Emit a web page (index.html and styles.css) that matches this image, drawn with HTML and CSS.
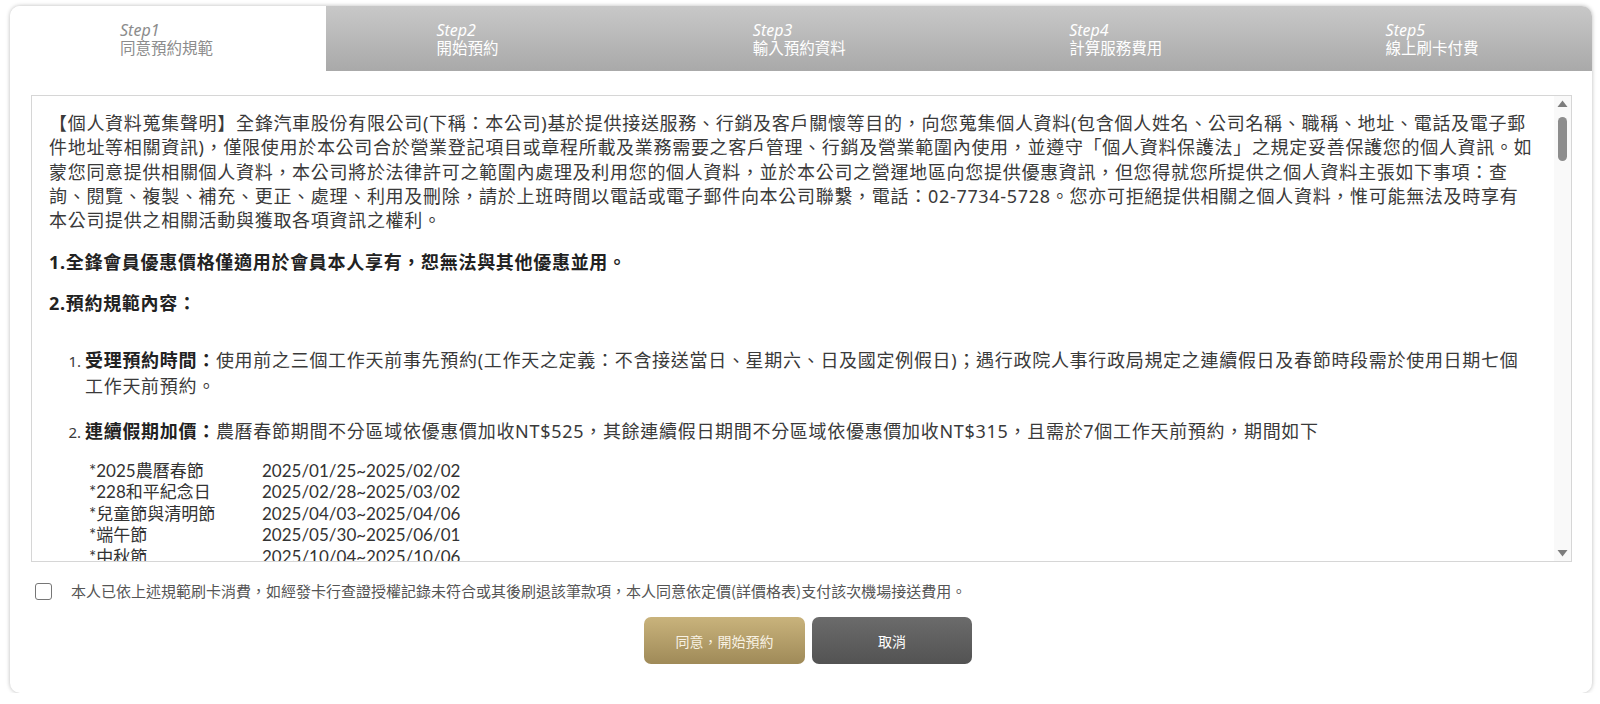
FILE: index.html
```html
<!DOCTYPE html>
<html lang="zh-Hant">
<head>
<meta charset="utf-8">
<title>同意預約規範</title>
<link rel="stylesheet" href="styles.css">
</head>
<body>
<div class="card">
  <div class="tabs">
    <div class="tab active"><span class="step-num">Step1</span><span class="step-name">同意預約規範</span></div>
    <div class="tab"><span class="step-num">Step2</span><span class="step-name">開始預約</span></div>
    <div class="tab"><span class="step-num">Step3</span><span class="step-name">輸入預約資料</span></div>
    <div class="tab"><span class="step-num">Step4</span><span class="step-name">計算服務費用</span></div>
    <div class="tab"><span class="step-num">Step5</span><span class="step-name">線上刷卡付費</span></div>
  </div>

  <div class="terms-wrap">
    <div class="terms">
      <p class="intro">【個人資料蒐集聲明】全鋒汽車股份有限公司(下稱：本公司)基於提供接送服務、行銷及客戶關懷等目的，向您蒐集個人資料(包含個人姓名、公司名稱、職稱、地址、電話及電子郵件地址等相關資訊)，僅限使用於本公司合於營業登記項目或章程所載及業務需要之客戶管理、行銷及營業範圍內使用，並遵守「個人資料保護法」之規定妥善保護您的個人資訊。如蒙您同意提供相關個人資料，本公司將於法律許可之範圍內處理及利用您的個人資料，並於本公司之營運地區向您提供優惠資訊，但您得就您所提供之個人資料主張如下事項：查詢、閱覽、複製、補充、更正、處理、利用及刪除，請於上班時間以電話或電子郵件向本公司聯繫，電話：02-7734-5728。您亦可拒絕提供相關之個人資料，惟可能無法及時享有本公司提供之相關活動與獲取各項資訊之權利。</p>
      <p class="rule rule-first">1.全鋒會員優惠價格僅適用於會員本人享有，恕無法與其他優惠並用。</p>
      <p class="rule">2.預約規範內容：</p>
      <ol class="rule-list">
        <li class="item-first"><strong>受理預約時間：</strong>使用前之三個工作天前事先預約(工作天之定義：不含接送當日、星期六、日及國定例假日)；遇行政院人事行政局規定之連續假日及春節時段需於使用日期七個工作天前預約。</li>
        <li class="item-second"><strong>連續假期加價：</strong>農曆春節期間不分區域依優惠價加收NT$525，其餘連續假日期間不分區域依優惠價加收NT$315，且需於7個工作天前預約，期間如下
          <div class="holidays">
            <div class="holiday"><span class="h-name">*2025農曆春節</span><span class="h-date">2025/01/25~2025/02/02</span></div>
            <div class="holiday"><span class="h-name">*228和平紀念日</span><span class="h-date">2025/02/28~2025/03/02</span></div>
            <div class="holiday"><span class="h-name">*兒童節與清明節</span><span class="h-date">2025/04/03~2025/04/06</span></div>
            <div class="holiday"><span class="h-name">*端午節</span><span class="h-date">2025/05/30~2025/06/01</span></div>
            <div class="holiday"><span class="h-name">*中秋節</span><span class="h-date">2025/10/04~2025/10/06</span></div>
          </div>
        </li>
      </ol>
    </div>
    <div class="scrollbar" aria-hidden="true">
      <svg class="sb-arrow sb-up" width="17" height="17" viewBox="0 0 17 17"><path d="M3.5 11 L8.5 4.5 L13.5 11 Z" fill="#7d7d7d"/></svg>
      <div class="sb-track"><div class="sb-thumb"></div></div>
      <svg class="sb-arrow sb-down" width="17" height="17" viewBox="0 0 17 17"><path d="M3.5 6 L8.5 12.5 L13.5 6 Z" fill="#7d7d7d"/></svg>
    </div>
  </div>

  <label class="agree">
    <input type="checkbox" class="agree-box">
    <span class="agree-text">本人已依上述規範刷卡消費，如經發卡行查證授權記錄未符合或其後刷退該筆款項，本人同意依定價(詳價格表)支付該次機場接送費用。</span>
  </label>

  <div class="actions">
    <button class="btn btn-agree" type="button">同意，開始預約</button>
    <button class="btn btn-cancel" type="button">取消</button>
  </div>
</div>
</body>
</html>
```

FILE: styles.css
```css
html, body {
  margin: 0;
  padding: 0;
  background: #ffffff;
}

body {
  padding: 6px 8px 0 10px;
  font-family: "Noto Sans", "Noto Sans CJK TC", sans-serif;
  color: #333;
}

.card {
  height: 687px;
  border-radius: 10px;
  background: #fff;
  box-shadow: 0 0 4px rgba(0, 0, 0, 0.28);
  overflow: hidden;
  display: flex;
  flex-direction: column;
}

.tabs {
  display: grid;
  grid-template-columns: repeat(5, 1fr);
  height: 65px;
  flex: none;
}

.tab {
  display: flex;
  flex-direction: column;
  padding: 15px 0 0 110px;
  background: linear-gradient(to bottom, #c8c8c8, #a9a9a9);
  color: #fff;
}

.tab.active {
  background: #fff;
  color: #8c8c8c;
}

.step-num {
  font-style: italic;
  font-size: 16px;
  line-height: 18px;
}

.step-name {
  font-family: "Noto Sans CJK TC", sans-serif;
  font-size: 15.5px;
  line-height: 16px;
}

.terms-wrap {
  position: relative;
  flex: none;
  margin: 24px 20px 0 21px;
  height: 465px;
  border: 1px solid #d6d6d6;
}

.terms {
  height: 100%;
  overflow: hidden;
  box-sizing: border-box;
  padding: 15px 36px 0 17px;
  font-size: 18px;
  letter-spacing: 0.7px;
  color: #3a3a3a;
}

.scrollbar {
  position: absolute;
  top: 0;
  right: 0;
  bottom: 0;
  width: 17px;
  display: flex;
  flex-direction: column;
  background: #f9f9f9;
}

.sb-arrow {
  display: block;
  flex: none;
}

.sb-track {
  flex: 1;
  padding: 4px 4px 0;
}

.sb-thumb {
  width: 9px;
  height: 44px;
  border-radius: 5px;
  background: #8d8d8d;
}

.intro {
  margin: 0;
  line-height: 24.3px;
}

.rule {
  margin: 17px 0 0;
  line-height: 24px;
  font-weight: bold;
  color: #222;
}

.rule-first {
  margin-top: 18px;
}

.rule-list {
  margin: 33px 0 0;
  padding-left: 36px;
}

.rule-list li {
  line-height: 25.5px;
}

.rule-list li::marker {
  font-size: 15px;
  letter-spacing: 0;
}

.rule-list strong {
  color: #222;
}

.item-second {
  margin-top: 20px;
}

.holidays {
  margin-top: 15px;
  padding-left: 4px;
  font-family: Lato, "Noto Sans CJK TC", sans-serif;
  font-size: 17px;
  letter-spacing: 0;
  color: #333;
}

.holiday {
  line-height: 21.5px;
}

.h-name {
  display: inline-block;
  width: 173px;
}

.agree {
  flex: none;
  display: flex;
  align-items: center;
  gap: 19px;
  margin: 20px 0 0 25px;
}

.agree-box {
  margin: 0;
  width: 17px;
  height: 17px;
  appearance: none;
  border: 1px solid #767676;
  border-radius: 3px;
  background: #fff;
}

.agree-text {
  font-family: "Noto Sans CJK TC", sans-serif;
  font-size: 15px;
  line-height: 18px;
  color: #555;
}

.actions {
  flex: none;
  display: flex;
  justify-content: center;
  gap: 7px;
  margin-top: 17px;
  padding-left: 14px;
}

.btn {
  width: 161px;
  height: 47px;
  border: none;
  border-radius: 7px;
  font-family: "Noto Sans CJK TC", sans-serif;
  font-size: 14px;
  cursor: pointer;
}

.btn-agree {
  background: linear-gradient(to bottom, #c9b37c, #9f8a58);
  color: #f7f1e3;
}

.btn-cancel {
  width: 160px;
  background: linear-gradient(to bottom, #6b6b6b, #535353);
  color: #fff;
}
```
